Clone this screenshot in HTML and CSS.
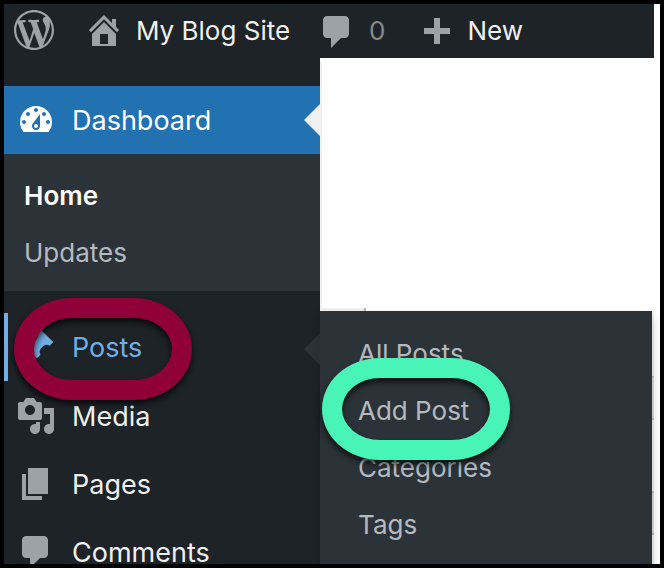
FILE: index.html
```html
<!DOCTYPE html>
<html lang="en">
<head>
<meta charset="UTF-8">
<meta name="viewport" content="width=device-width, initial-scale=1.0">
<title>Dashboard - My Blog Site</title>
<link rel="stylesheet" href="styles.css">
</head>
<body>

<div class="screen">
    <header class="toolbar">
        <a class="logo" href="#" aria-label="About WordPress">
            <svg class="icon" viewBox="0 0 20 20"><path d="M20 10c0-5.51-4.49-10-10-10C4.48 0 0 4.49 0 10c0 5.52 4.48 10 10 10 5.51 0 10-4.48 10-10zM7.78 15.37L4.37 6.22c.55-.02 1.17-.08 1.17-.08.5-.06.44-1.13-.06-1.11 0 0-1.45.11-2.37.11-.18 0-.37 0-.58-.01C4.12 2.69 6.87 1.11 10 1.11c2.33 0 4.45.87 6.05 2.34-.68-.11-1.65.39-1.65 1.58 0 .74.45 1.36.9 2.1.35.61.55 1.36.55 2.46 0 1.49-1.4 5-1.4 5l-3.03-8.37c.54-.02.82-.17.82-.17.5-.05.44-1.25-.06-1.22 0 0-1.44.12-2.38.12-.87 0-2.33-.12-2.33-.12-.5-.03-.56 1.2-.06 1.22l.92.08 1.26 3.41zM17.41 10c.24-.64.74-1.87.43-4.25.7 1.29 1.05 2.71 1.05 4.25 0 3.29-1.73 6.24-4.4 7.78.97-2.59 1.94-5.2 2.92-7.78zM6.1 18.09C3.12 16.65 1.11 13.53 1.11 10c0-1.3.23-2.48.72-3.59C3.25 10.3 4.67 14.2 6.1 18.09zm4.03-6.63l2.58 6.98c-.86.29-1.76.45-2.71.45-.79 0-1.57-.11-2.29-.33.81-2.38 1.62-4.74 2.42-7.1z"/></svg>
        </a>
        <a class="site" href="#">
            <svg class="icon" viewBox="0 0 20 20"><path fill-rule="evenodd" d="M16 8.5l1.53 1.53-1.06 1.06L10 4.6l-6.47 6.49-1.06-1.06L10 2.5l4 4v-2h2v4zm-6-2.46l6 5.99V18H4v-5.97zM12 17v-5H8v5h4z"/></svg>
            My Blog Site
        </a>
        <a class="count" href="#">
            <svg class="icon" viewBox="0 0 20 20"><path d="M5 3h9c1.1 0 2 .9 2 2v7c0 1.1-.9 2-2 2h-2l-5 5v-5H5c-1.1 0-2-.9-2-2V5c0-1.1.9-2 2-2z"/></svg>
            0
        </a>
        <a class="new" href="#">
            <svg class="icon" viewBox="0 0 20 20"><path d="M17 9v3h-5v5H9v-5H4V9h5V4h3v5h5z"/></svg>
            New
        </a>
    </header>

    <div class="main">
        <nav class="sidebar">
            <ul class="menu">
                <li class="item current">
                    <a href="#">
                        <svg class="icon" viewBox="0 0 20 20"><path fill-rule="evenodd" d="M3.76 16h12.48c1.1-1.37 1.76-3.11 1.76-5 0-4.42-3.58-8-8-8s-8 3.58-8 8c0 1.89.66 3.63 1.76 5zM10 4c.55 0 1 .45 1 1s-.45 1-1 1-1-.45-1-1 .45-1 1-1zM6 6c.55 0 1 .45 1 1s-.45 1-1 1-1-.45-1-1 .45-1 1-1zm8 0c.55 0 1 .45 1 1s-.45 1-1 1-1-.45-1-1 .45-1 1-1zm-5.37 5.55L12 7v6c0 1.1-.9 2-2 2s-2-.9-2-2c0-.57.24-1.08.63-1.45zM4 10c.55 0 1 .45 1 1s-.45 1-1 1-1-.45-1-1 .45-1 1-1zm12 0c.55 0 1 .45 1 1s-.45 1-1 1-1-.45-1-1 .45-1 1-1zm-5 3c0-.55-.45-1-1-1s-1 .45-1 1 .45 1 1 1 1-.45 1-1z"/></svg>
                        Dashboard
                    </a>
                    <ul class="submenu">
                        <li><a class="active" href="#">Home</a></li>
                        <li><a href="#">Updates</a></li>
                    </ul>
                </li>
                <li class="item open">
                    <a href="#">
                        <svg class="icon" viewBox="0 0 20 20"><path d="M10.44 3.02l1.82-1.82 6.36 6.35-1.83 1.82c-1.05-.68-2.48-.57-3.41.36l-.75.75c-.92.93-1.04 2.35-.35 3.41l-1.83 1.82-2.41-2.41-2.8 2.79c-.42.42-3.38 2.71-3.8 2.29s1.86-3.39 2.28-3.81l2.79-2.79L4.1 9.36l1.83-1.82c1.05.69 2.48.57 3.4-.36l.75-.75c.93-.92 1.05-2.35.36-3.41z"/></svg>
                        Posts
                    </a>
                    <ul class="flyout">
                        <li><a href="#">All Posts</a></li>
                        <li class="marked"><a href="#">Add Post</a><span class="ring ring-green"></span></li>
                        <li><a href="#">Categories</a></li>
                        <li><a href="#">Tags</a></li>
                    </ul>
                    <span class="ring ring-red"></span>
                </li>
                <li class="item">
                    <a href="#">
                        <svg class="icon" viewBox="0 0 20 20"><path fill-rule="evenodd" d="M13 11V4c0-.55-.45-1-1-1h-1.67L9 1H5L3.67 3H2c-.55 0-1 .45-1 1v7c0 .55.45 1 1 1h10c.55 0 1-.45 1-1zM7 4.5c1.38 0 2.5 1.12 2.5 2.5S8.38 9.5 7 9.5 4.5 8.38 4.5 7 5.62 4.5 7 4.5zM14 6h5v10.5c0 1.38-1.12 2.5-2.5 2.5S14 17.88 14 16.5s1.12-2.5 2.5-2.5c.17 0 .34.02.5.05V9h-3V6zm-4 8.05V13h2v3.5c0 1.38-1.12 2.5-2.5 2.5S7 17.88 7 16.5 8.12 14 9.5 14c.17 0 .34.02.5.05z"/></svg>
                        Media
                    </a>
                </li>
                <li class="item">
                    <a href="#">
                        <svg class="icon" viewBox="0 0 20 20"><path d="M6 15V2h10v13H6zm-1 1h8v2H3V5h2v11z"/></svg>
                        Pages
                    </a>
                </li>
                <li class="item">
                    <a href="#">
                        <svg class="icon" viewBox="0 0 20 20"><path d="M5 2h9c1.1 0 2 .9 2 2v7c0 1.1-.9 2-2 2h-2l-5 5v-5H5c-1.1 0-2-.9-2-2V4c0-1.1.9-2 2-2z"/></svg>
                        Comments
                    </a>
                </li>
            </ul>
        </nav>

        <main class="content">
            <div class="tab"></div>
            <!-- edge of the panels behind the open menu -->
            <div class="edge">
                <div class="panel"></div>
                <div class="panel"></div>
            </div>
        </main>
    </div>
</div>

</body>
</html>
```

FILE: styles.css
```css
* {
    box-sizing: border-box;
}

body {
    font-family: Inter, "Liberation Sans", sans-serif;
    font-size: 26px;
    margin: 0;
    background-color: #fff;
}

a {
    color: #f0f0f1;
    text-decoration: none;
}

ul {
    list-style: none;
    margin: 0;
    padding: 0;
}

.screen {
    display: flex;
    flex-direction: column;
    height: 100vh;
    border: 4px solid #000;
    overflow: hidden;
}

.icon {
    width: 40px;
    height: 40px;
    flex: none;
    fill: #9ca2a7;
}

/* top bar */
.toolbar {
    display: flex;
    align-items: center;
    flex: none;
    height: 54px;
    margin-right: 6px;
    padding: 0 0 2px 10px;
    background-color: #1d2327;
    white-space: nowrap;
}

.toolbar a {
    display: flex;
    align-items: center;
    gap: 12px;
}

.toolbar .site {
    margin-left: 30px;
}

.toolbar .count {
    margin-left: 27px;
    color: #87898c;
}

.toolbar .new {
    margin-left: 30px;
}

.main {
    display: flex;
    flex: 1;
    min-height: 0;
}

/* side menu */
.sidebar {
    flex: none;
    width: 316px;
    padding-top: 28px;
    background-color: #1d2327;
}

.item {
    position: relative;
}

.item > a {
    display: flex;
    align-items: center;
    gap: 16px;
    height: 68px;
    padding-left: 12px;
    font-size: 27px;
}

.current > a {
    background-color: #2271b1;
    color: #fff;
}

.current .icon {
    fill: #fff;
}

.current > a::after,
.open > a::after {
    content: "";
    position: absolute;
    top: 18px;
    right: 0;
    border: 16px solid transparent;
    border-left: 0;
    border-right-color: #f0f0f1;
}

.open > a::after {
    top: 20px;
    border-right-color: #2c3338;
}

.submenu {
    padding: 13px 0 10px;
    background-color: #2c3338;
}

.submenu a,
.flyout a {
    display: block;
    padding-left: 20px;
    line-height: 57px;
    color: #b5bac0;
}

.submenu .active {
    font-weight: 600;
    color: #fff;
}

.open {
    margin-top: 22px;
    padding-bottom: 1px;
}

.open > a {
    color: #72aee6;
    box-shadow: inset 4px 0 0 #72aee6;
}

.open .icon {
    fill: #72aee6;
}

.flyout {
    position: absolute;
    top: -2px;
    left: 100%;
    width: 332px;
    padding: 14px 0;
    background-color: #2c3338;
    box-shadow: 0 6px 10px rgba(0, 0, 0, 0.2);
}

.flyout a {
    padding-left: 38px;
}

.marked {
    position: relative;
}

/* highlight rings */
.ring {
    position: absolute;
    z-index: 2;
    height: 102px;
    border: 20px solid;
    border-radius: 58px / 51px;
    filter: drop-shadow(0 4px 3px rgba(0, 0, 0, 0.7));
    pointer-events: none;
}

.ring-red {
    top: -15px;
    left: 10px;
    width: 178px;
    border-color: #900039;
}

.ring-green {
    top: -24px;
    left: 2px;
    width: 188px;
    border-color: #48f4b7;
}

/* page area */
.content {
    display: flex;
    justify-content: space-between;
    flex: 1;
    margin: 4px 6px 0 0;
    border-left: 2px solid #f0f0f1;
}

.tab {
    width: 44px;
    margin-top: 246px;
    border-right: 2px solid #b4b4b6;
    background-color: #f0f0f1;
}

.edge {
    width: 2px;
    margin-top: 249px;
    padding-top: 65px;
    background-color: #f0f0f1;
}

.panel {
    height: 44px;
    margin-bottom: 71px;
    border-top: 2px solid #c3c4c7;
    border-bottom: 2px solid #c3c4c7;
    background-color: #dcdcde;
}
```
